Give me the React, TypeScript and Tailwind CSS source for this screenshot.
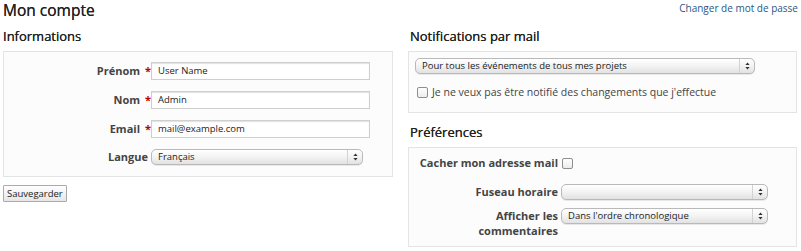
import React from "react";

const font = "font-['Open_Sans','DejaVu_Sans',sans-serif]";

interface SelectProps {
  value?: string;
  width: number;
}

const FakeSelect = ({ value = "", width }: SelectProps) => {
  return (
    <div
      className="relative flex h-[16px] items-center rounded-[5px] border border-[#b9b9b9] bg-gradient-to-b from-[#ffffff] via-[#f3f3f3] to-[#e2e2e2] pl-[6px] text-[9.5px] text-[#222] shadow-[0_1px_0_rgba(0,0,0,0.08)]"
      style={{ width }}
    >
      <span className="whitespace-nowrap leading-[14px]">{value}</span>
      <div className="absolute right-0 top-0 flex h-full w-[15px] items-center justify-center border-l border-[#d2d2d2]">
        <svg width="5" height="8" viewBox="0 0 5 8">
          <path d="M2.5 0.5 L4.6 3 L0.4 3 Z" fill="#333" />
          <path d="M2.5 7.5 L4.6 5 L0.4 5 Z" fill="#333" />
        </svg>
      </div>
    </div>
  );
};

const Input = ({ value }: { value: string }) => (
  <div className="flex h-[18px] w-[219px] items-center border border-[#cfcfcf] bg-white pl-[6px] text-[9.5px] text-[#222] shadow-[inset_0_1px_1px_rgba(0,0,0,0.12)]">
    {value}
  </div>
);

const Checkbox = () => (
  <div className="h-[11px] w-[11px] rounded-[2px] border border-[#8e8e8e] bg-gradient-to-b from-white to-[#ececec]" />
);

const Required = () => <span className="ml-[5px] text-[#bb0000]">*</span>;

const rows = [
  { label: "Prénom", value: "User Name" },
  { label: "Nom", value: "Admin" },
  { label: "Email", value: "mail@example.com" },
];

export default function App() {
  return (
    <div className={`h-[251px] w-[801px] overflow-hidden bg-white px-[3px] text-[#505050] ${font}`}>
      <div className="flex items-start justify-between">
        <h2 className="text-[15.5px] leading-[20px] text-[#222] [text-shadow:0_0_0.4px_#222]">Mon compte</h2>
        <a className="mt-[1px] text-[10px] leading-[14px] text-[#2a5685]">Changer de mot de passe</a>
      </div>

      <div className="flex gap-[15px]">
        <div className="w-[390px]">
          <h3 className="mt-[7px] text-[13px] leading-[18px] text-[#222] [text-shadow:0_0_0.4px_#222]">Informations</h3>
          <div className="mt-[6px] flex h-[126px] flex-col gap-[11px] border border-[#e4e4e4] bg-[#fcfcfc] pt-[10px]">
            {rows.map((r) => (
              <div key={r.label} className="flex items-center">
                <div className="w-[147px] text-right text-[11px] font-bold text-[#444]">
                  {r.label}
                  <Required />
                </div>
                <Input value={r.value} />
              </div>
            ))}
            <div className="flex items-center">
              <div className="w-[144px] text-right text-[11px] font-bold text-[#444]">Langue</div>
              <div className="ml-[3px]">
                <FakeSelect value="Français" width={212} />
              </div>
            </div>
          </div>
          <button className="mt-[8px] h-[17px] rounded-[1px] border border-[#aaa] bg-gradient-to-b from-white to-[#e6e6e6] px-[3px] text-[9.5px] leading-none text-[#222]">
            Sauvegarder
          </button>
        </div>

        <div className="w-[389px]">
          <h3 className="ml-[2px] mt-[7px] text-[13px] leading-[18px] text-[#222] [text-shadow:0_0_0.4px_#222]">Notifications par mail</h3>
          <div className="mt-[6px] h-[62px] border border-[#e4e4e4] bg-[#fcfcfc] px-[6px] pt-[6px]">
            <FakeSelect value="Pour tous les événements de tous mes projets" width={340} />
            <div className="mt-[11px] flex items-center gap-[4px] pl-[2px] text-[10.5px] text-[#444]">
              <Checkbox />
              <span>Je ne veux pas être notifié des changements que j'effectue</span>
            </div>
          </div>

          <h3 className="ml-[2px] mt-[10px] text-[13px] leading-[18px] text-[#222] [text-shadow:0_0_0.4px_#222]">Préférences</h3>
          <div className="mt-[6px] h-[100px] border border-[#e4e4e4] bg-[#fcfcfc] pt-[7px]">
            <div className="flex items-center">
              <div className="w-[149px] text-right text-[11px] font-bold text-[#444]">Cacher mon adresse mail</div>
              <div className="ml-[4px]">
                <Checkbox />
              </div>
            </div>
            <div className="mt-[12px] flex items-center">
              <div className="w-[149px] text-right text-[11px] font-bold text-[#444]">Fuseau horaire</div>
              <div className="ml-[3px]">
                <FakeSelect width={207} />
              </div>
            </div>
            <div className="mt-[8px] flex items-start">
              <div className="w-[149px] text-right text-[11px] font-bold leading-[15px] text-[#444]">
                Afficher les
                <br />
                commentaires
              </div>
              <div className="ml-[3px]">
                <FakeSelect value="Dans l'ordre chronologique" width={207} />
              </div>
            </div>
          </div>
        </div>
      </div>
    </div>
  );
}
